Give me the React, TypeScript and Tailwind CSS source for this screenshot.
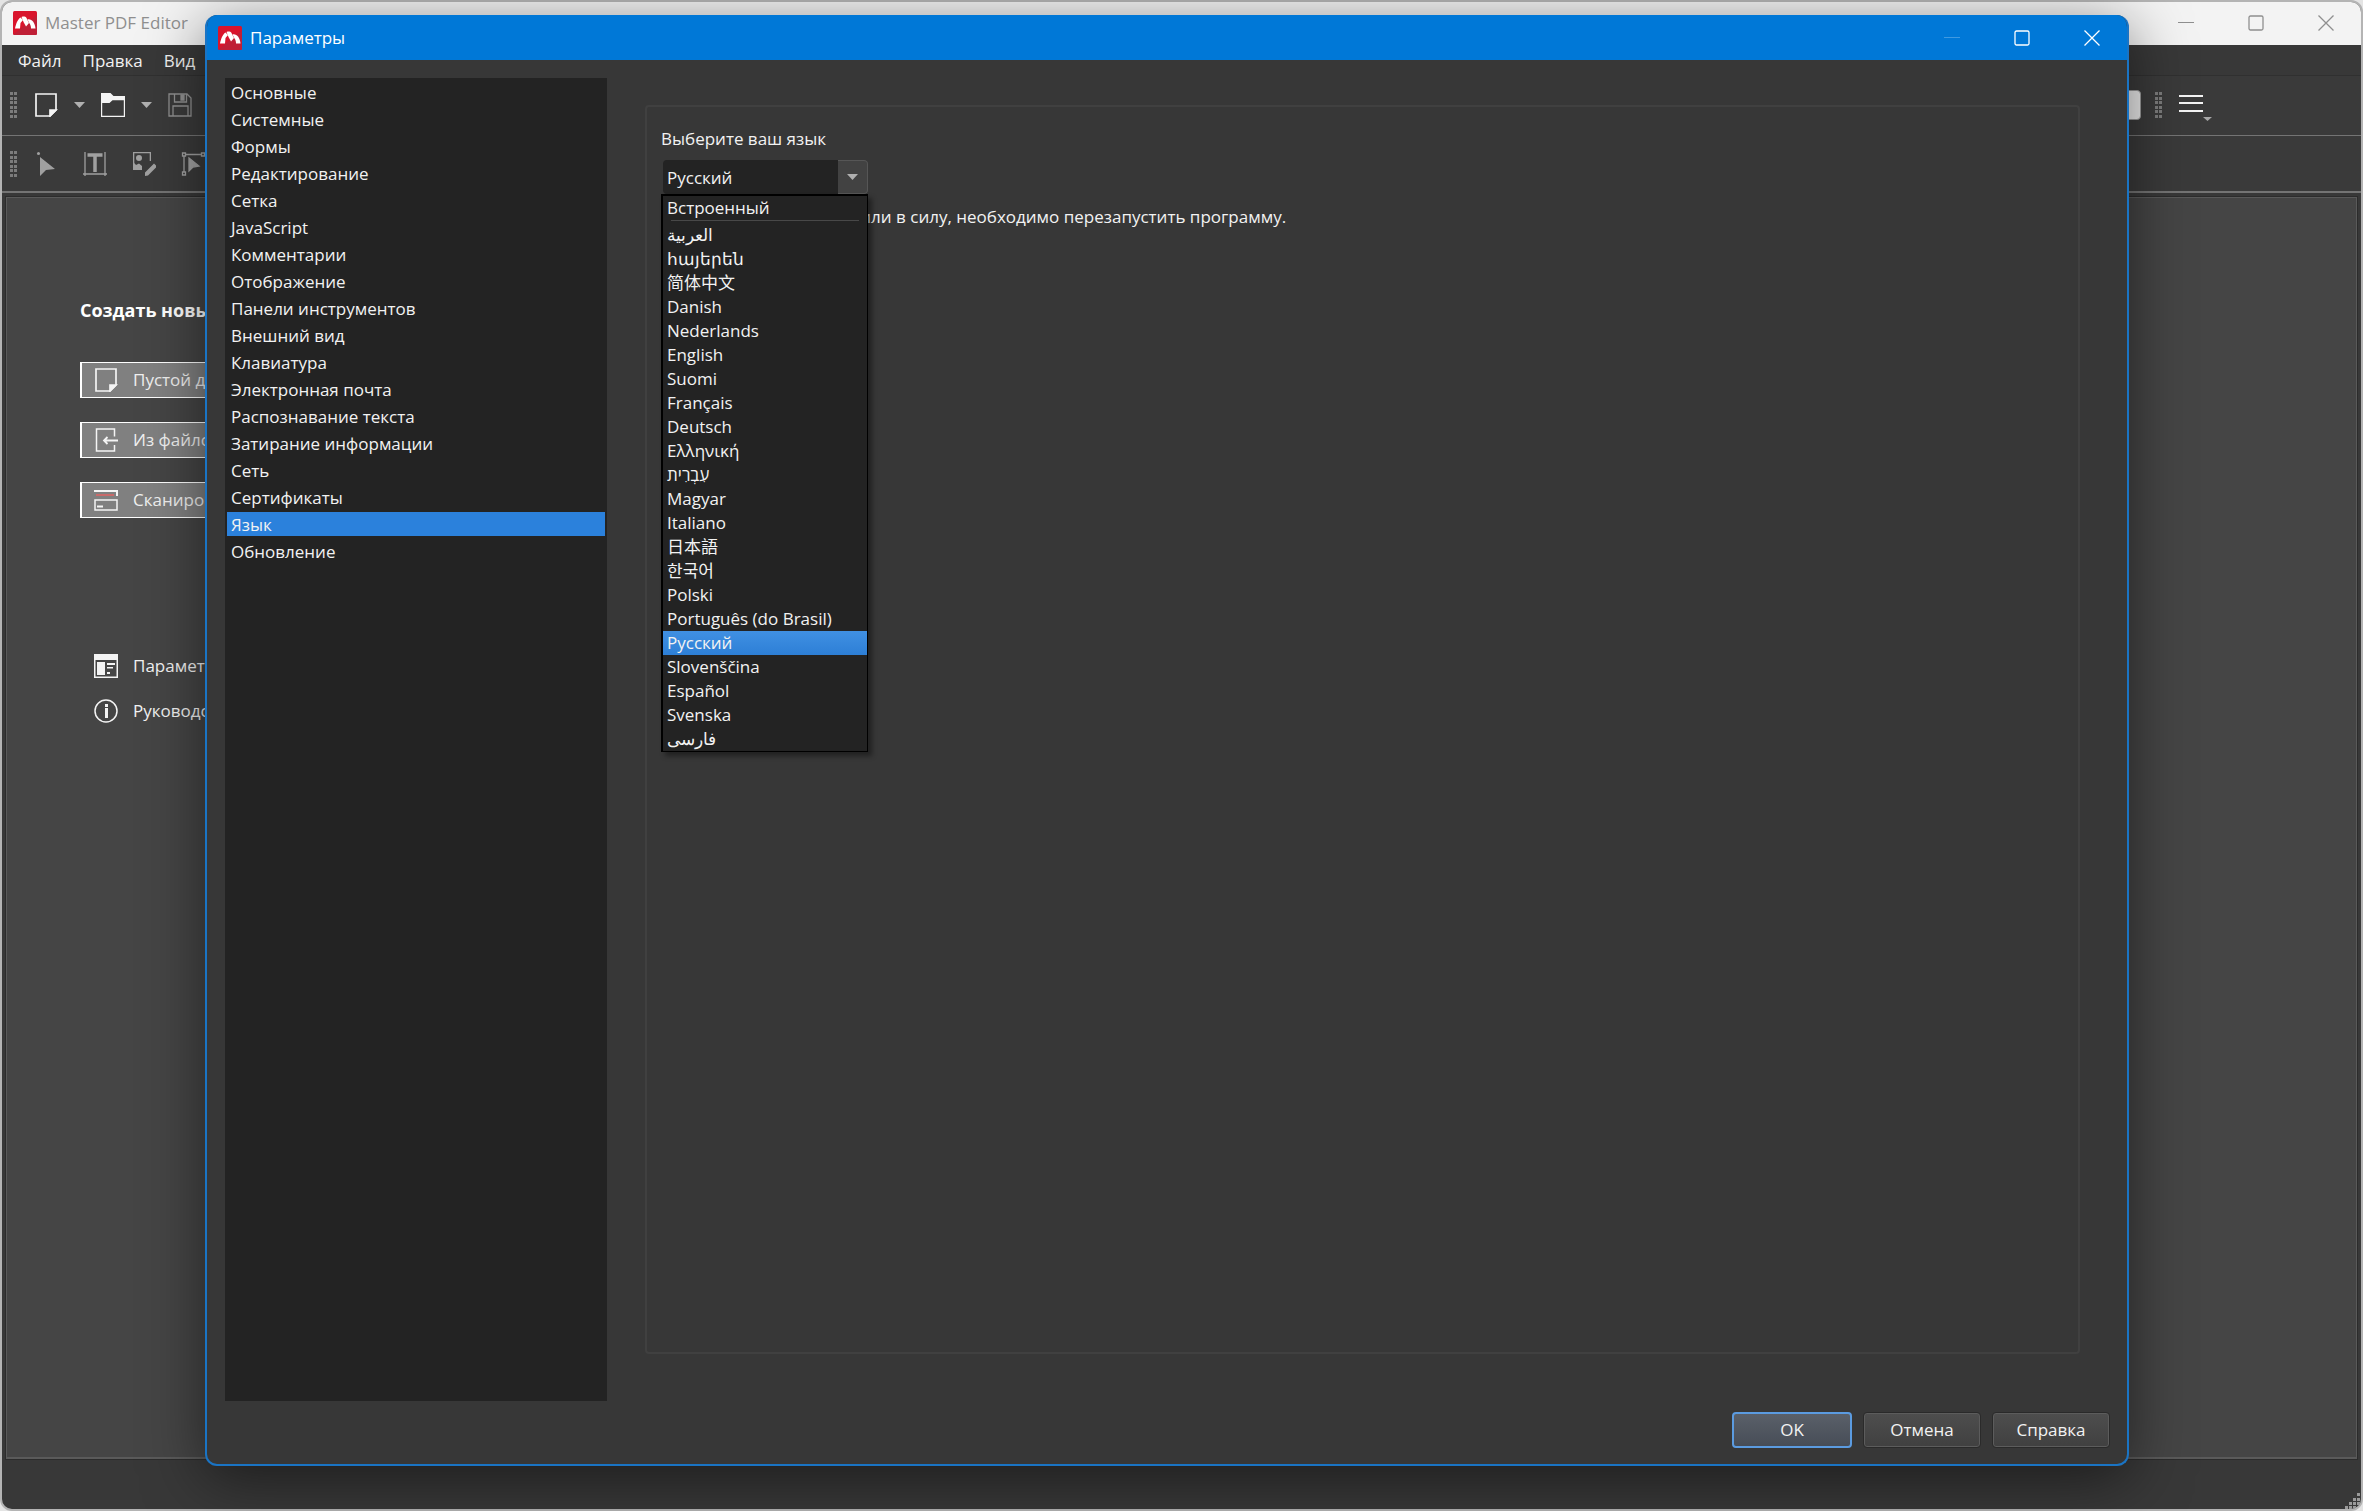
import { ReactNode, useState } from "react";

const sections = [
    "Основные",
    "Системные",
    "Формы",
    "Редактирование",
    "Сетка",
    "JavaScript",
    "Комментарии",
    "Отображение",
    "Панели инструментов",
    "Внешний вид",
    "Клавиатура",
    "Электронная почта",
    "Распознавание текста",
    "Затирание информации",
    "Сеть",
    "Сертификаты",
    "Язык",
    "Обновление",
];

const languages = [
    "العربية",
    "հայերեն",
    "简体中文",
    "Danish",
    "Nederlands",
    "English",
    "Suomi",
    "Français",
    "Deutsch",
    "Ελληνική",
    "עִבְרִית",
    "Magyar",
    "Italiano",
    "日本語",
    "한국어",
    "Polski",
    "Português (do Brasil)",
    "Русский",
    "Slovenščina",
    "Español",
    "Svenska",
    "فارسی",
];

function Logo() {
    return (
        <svg className="size-6 shrink-0" viewBox="0 0 24 24">
            <rect width="24" height="24" rx="1.5" fill="#d9142c" />
            <path d="M0 24 24 4v18.5a1.5 1.5 0 0 1-1.5 1.5z" fill="#b4233a" opacity=".7" />
            <path d="M2 17.5C3 13 4.500 8.500 7.500 6.500L10 9 7.500 12 7 17.500z" fill="#fff" />
            <path d="M8.500 6c2-.7 4-.5 5 1l2.500 5-3 3.500L10.500 11z" fill="#fff" />
            <path d="M14.500 8.500c4-1 7.500 3 8 9H18c0-2-.5-4-1.500-5z" fill="#fff" />
        </svg>
    );
}

function WindowButtons({ dimMinimize = false }: { dimMinimize?: boolean }) {
    return (
        <div className="flex h-full">
            <button type="button" aria-label="Свернуть" className="flex w-[70px] items-center justify-center">
                <svg className={dimMinimize ? "size-4 opacity-25" : "size-4"} viewBox="0 0 16 16" stroke="currentColor">
                    <path d="M0 7.500h16" />
                </svg>
            </button>
            <button type="button" aria-label="Развернуть" className="flex w-[70px] items-center justify-center">
                <svg className="size-4" viewBox="0 0 16 16" fill="none" stroke="currentColor" strokeWidth="1.300">
                    <rect x="1" y="1" width="14" height="14" rx="1.500" />
                </svg>
            </button>
            <button type="button" aria-label="Закрыть" className="flex w-[70px] items-center justify-center">
                <svg className="size-4" viewBox="0 0 16 16" fill="none" stroke="currentColor" strokeWidth="1.300">
                    <path d="m.5.5 15 15m0-15-15 15" />
                </svg>
            </button>
        </div>
    );
}

function Grip() {
    return (
        <svg className="h-[26px] w-2 shrink-0" viewBox="0 0 8 26" fill="#7c7c7c">
            {[0, 5, 9, 14, 18, 23].map((y) => (
                <path key={y} d={`M0 ${y}h3v3H0zM4 ${y}h3v3H4z`} />
            ))}
        </svg>
    );
}

function Caret() {
    return (
        <svg className="h-1.5 w-[11px] shrink-0" viewBox="0 0 11 6" fill="#b0b0b0">
            <path d="M0 0h11L5.500 6z" />
        </svg>
    );
}

function PageIcon() {
    return (
        <svg className="size-6 shrink-0" viewBox="0 0 24 24" fill="none" stroke="#f4f4f4" strokeWidth="1.700">
            <path d="M2 1h20v16l-6 6H2z" />
            <path d="M16 23v-6h6z" fill="#f4f4f4" />
        </svg>
    );
}

function FromFileIcon() {
    return (
        <svg className="size-6 shrink-0" viewBox="0 0 24 24" fill="none" stroke="#f4f4f4" strokeWidth="1.500">
            <path d="M20.500 8.500V1h-18v22h18v-6" />
            <path d="M24 12.500H10m3.500-3.500L10 12.500l3.500 3.500" strokeWidth="1.800" />
        </svg>
    );
}

function ScanIcon() {
    return (
        <svg className="size-6 shrink-0" viewBox="0 0 24 24" fill="none" stroke="#f4f4f4" strokeWidth="1.500">
            <path d="M0 3h23v5" strokeWidth="2" />
            <path d="M2 7h18" stroke="#c96a6a" strokeWidth="2" />
            <path d="M1 12h22v10H1z" />
            <path d="M3 18.500h6" strokeWidth="2" />
        </svg>
    );
}

function SettingsIcon() {
    return (
        <svg className="size-6 shrink-0" viewBox="0 0 24 24" fill="#f4f4f4">
            <path d="M0 0h24v24H0zm1.500 6v16.500h21V6z" fillRule="evenodd" />
            <path d="M3 8h8v13H3zM13 9h8v2h-8zM13 13h6v1.500h-6zM13 18h3v2h-3z" />
        </svg>
    );
}

function InfoIcon() {
    return (
        <svg className="size-6 shrink-0" viewBox="0 0 24 24" fill="none" stroke="#f4f4f4" strokeWidth="1.500">
            <circle cx="12" cy="12" r="11" />
            <path d="M12.500 9v10M12.500 5v3" strokeWidth="3" />
        </svg>
    );
}

function ToolButton({ label, children }: { label: string; children: ReactNode }) {
    return (
        <button type="button" aria-label={label} className="flex shrink-0 items-center">
            {children}
        </button>
    );
}

function StartButton({ icon, children }: { icon: ReactNode; children: ReactNode }) {
    return (
        <button
            type="button"
            className="flex h-9 items-center gap-[15px] border border-l-2 border-white bg-[#808080] pl-3 whitespace-nowrap text-[#f0f0f0]"
        >
            {icon}
            {children}
        </button>
    );
}

function MainWindow() {
    return (
        <div className="flex h-full flex-col overflow-hidden rounded-xl border-2 border-[#b4b4b4] bg-[#383838]">
            <header className="flex h-[43px] shrink-0 items-center bg-[#f3f3f3] pb-0.5 pl-[11px] text-[#8f8f8f]">
                <Logo />
                <h1 className="ml-2 grow">Master PDF Editor</h1>
                <WindowButtons />
            </header>
            <nav className="flex h-[31px] shrink-0 items-center gap-[21px] border-b border-[#303030] pt-0.5 pl-4">
                <button type="button">Файл</button>
                <button type="button">Правка</button>
                <button type="button">Вид</button>
            </nav>
            <div className="flex h-[60px] shrink-0 items-center border-b border-[#747474] bg-[#3a3a3a] pb-px pl-2">
                <Grip />
                <div className="ml-4 flex grow items-center gap-4">
                    <ToolButton label="Создать">
                        <PageIcon />
                    </ToolButton>
                    <Caret />
                    <ToolButton label="Открыть">
                        <svg className="size-6" viewBox="0 0 24 24" fill="#f4f4f4">
                            <path d="M0 0h9.500l3 3H24v21H0zm1.200 10v12.800h21.600V7.200H11.500L8.500 10z" fillRule="evenodd" />
                        </svg>
                    </ToolButton>
                    <Caret />
                    <ToolButton label="Сохранить">
                        <svg className="size-6" viewBox="0 0 24 24" fill="none" stroke="#909090" strokeWidth="1.300">
                            <path d="M1 1h18l4 4v18H1zM6.500 1v8h12V1M5 23V13h15v10" />
                            <path d="M13 2h3v5h-3z" fill="#909090" />
                        </svg>
                    </ToolButton>
                </div>
                <input aria-label="Поиск" className="h-[30px] w-40 rounded border border-[#9a9a9a] bg-[#ececec]" />
                <div className="mr-[148px] ml-3.5 flex items-center gap-4">
                    <Grip />
                    <ToolButton label="Меню">
                        <svg className="h-8 w-[34px]" viewBox="0 0 34 32" fill="#f4f4f4">
                            <path d="M0 6h24v2H0zM0 13h24v2H0zM0 21h24v2H0z" />
                            <path d="M24 28h9l-4.500 4z" fill="#a8a8a8" />
                        </svg>
                    </ToolButton>
                </div>
            </div>
            <div className="flex h-[57px] shrink-0 items-center border-b-2 border-[#747474] bg-[#3a3a3a] pl-2">
                <Grip />
                <div className="ml-4 flex items-center gap-[25px]">
                    <ToolButton label="Выделение">
                        <svg className="size-6" viewBox="0 0 24 24" fill="#a0a0a0">
                            <path d="M6 5 21 17l-9 1-6 6z" />
                            <circle cx="4.500" cy="1.500" r="1.500" />
                        </svg>
                    </ToolButton>
                    <ToolButton label="Текст">
                        <svg className="size-6" viewBox="0 0 24 24" fill="none" stroke="#a0a0a0" strokeWidth="1.300">
                            <path d="M2 0v24M22 0v24M0 22h24" />
                            <path d="M4.500 3h15M12 3v17" strokeWidth="3.500" />
                        </svg>
                    </ToolButton>
                    <ToolButton label="Изображение">
                        <svg className="size-6" viewBox="0 0 24 24" fill="#a0a0a0">
                            <path d="M1 0h18v9h-1.300V1.300H2.300V11H1z" />
                            <circle cx="7" cy="6" r="3" />
                            <path d="M1 9.500 4 13l3-1.500 3 2.500v4H1zM13 20.500l9-9 3 3-9 9-3 .5z" />
                        </svg>
                    </ToolButton>
                    <ToolButton label="Объект">
                        <svg className="size-6" viewBox="0 0 24 24" fill="none" stroke="#a0a0a0" strokeWidth="1.300">
                            <path d="M1.500 1h3v3h-3zM20.500 1h3v3h-3zM1.500 20h3v3h-3zM4.500 2.500h16M3 4v16" />
                            <path d="m8 6 10 8-6 1-4 4z" fill="#a0a0a0" />
                        </svg>
                    </ToolButton>
                </div>
            </div>
            <main className="mx-[3px] mt-[3px] flex grow border border-[#2c2c2c] bg-[#454545]">
                <div className="flex grow flex-col border border-b-2 border-[#5a5a5a] pt-[99px] pl-[73px]">
                    <h2 className="text-[18px] font-bold whitespace-nowrap text-white">Создать новый документ</h2>
                    <div className="mt-[38px] flex w-[400px] flex-col gap-6">
                        <StartButton icon={<PageIcon />}>Пустой документ</StartButton>
                        <StartButton icon={<FromFileIcon />}>Из файлов</StartButton>
                        <StartButton icon={<ScanIcon />}>Сканировать</StartButton>
                    </div>
                    <div className="mt-[136px] flex flex-col items-start gap-[21px] pl-3.5">
                        <button type="button" className="flex h-6 items-center gap-[15px]">
                            <SettingsIcon />
                            Параметры
                        </button>
                        <button type="button" className="flex h-6 items-center gap-[15px]">
                            <InfoIcon />
                            Руководство
                        </button>
                    </div>
                </div>
            </main>
            <footer className="flex h-[49px] shrink-0 items-end justify-end">
                <svg className="size-4" viewBox="0 0 16 16" fill="#9a9a9a">
                    <path d="M12 0h3v3h-3zM8 5h3v3H8zM12 5h3v3h-3zM4 9h3v3H4zM8 9h3v3H8zM12 9h3v3h-3zM0 13h3v3H0zM4 13h3v3H4zM8 13h3v3H8zM12 13h3v3h-3z" />
                </svg>
            </footer>
        </div>
    );
}

function LanguageSelect() {
    const [language, setLanguage] = useState("Русский");

    return (
        <div className="relative mt-[9px] w-[207px]">
            <button
                type="button"
                id="language"
                aria-haspopup="listbox"
                aria-expanded="true"
                className="ml-0.5 flex h-[34px] w-[205px] items-stretch rounded bg-[#232323] text-left"
            >
                <span className="flex grow items-center pt-px pl-1">{language}</span>
                <span className="flex w-[30px] items-center justify-center rounded-r border border-l-0 border-[#565656] bg-[#424242]">
                    <Caret />
                </span>
            </button>
            <ul
                role="listbox"
                aria-labelledby="language-label"
                className="absolute top-[34px] left-0 w-full border-2 border-r border-b border-black bg-[#232323] shadow-[4px_4px_5px_rgba(0,0,0,0.4)]"
            >
                <li role="option" aria-selected="false" className="h-[22px] pl-1 leading-[24px]">
                    Встроенный
                </li>
                <li role="separator" className="mx-2 my-0.5 h-px bg-[#484848]" />
                {languages.map((name) => (
                    <li
                        key={name}
                        role="option"
                        aria-selected={name === language}
                        onClick={() => setLanguage(name)}
                        className={
                            name === language
                                ? "h-6 bg-linear-to-b from-[#4090e2] to-[#2d7fd6] pl-1 leading-[24px]"
                                : "h-6 pl-1 leading-[24px]"
                        }
                    >
                        {name}
                    </li>
                ))}
            </ul>
        </div>
    );
}

function SettingsDialog() {
    const [section, setSection] = useState("Язык");

    return (
        <div
            role="dialog"
            aria-label="Параметры"
            className="absolute top-[15px] right-[234px] bottom-[45px] left-[205px] flex flex-col overflow-hidden rounded-xl border-2 border-t-0 border-[#1a74c4] bg-[#373737] shadow-[0_12px_60px_rgba(0,0,0,0.5)]"
        >
            <header className="flex h-[45px] shrink-0 items-center bg-[#0078d7] pl-[11px] text-white">
                <Logo />
                <h2 className="ml-2 grow">Параметры</h2>
                <WindowButtons dimMinimize />
            </header>
            <div className="flex grow pl-[18px]">
                <ul className="mt-[18px] mb-[11px] flex w-[382px] shrink-0 flex-col gap-[3px] bg-[#232323] p-0.5">
                    {sections.map((name) => (
                        <li key={name}>
                            <button
                                type="button"
                                onClick={() => setSection(name)}
                                className={
                                    name === section
                                        ? "block h-6 w-full bg-[#2b81dc] pt-0.5 pl-1 text-left leading-[22px]"
                                        : "block h-6 w-full pt-0.5 pl-1 text-left leading-[22px]"
                                }
                            >
                                {name}
                            </button>
                        </li>
                    ))}
                </ul>
                <section className="mt-[45px] mr-[47px] mb-[58px] ml-[38px] grow rounded border-2 border-[#404040] pt-5 pl-[14px]">
                    <label id="language-label" htmlFor="language" className="block leading-[24px]">
                        Выберите ваш язык
                    </label>
                    <LanguageSelect />
                    <p className="mt-[11px] leading-[24px]">
                        Чтобы изменения вступили в силу, необходимо перезапустить программу.
                    </p>
                </section>
            </div>
            <footer className="flex justify-end gap-[11px] pr-[17px] pb-4">
                <button
                    type="button"
                    className="h-9 w-[120px] rounded border-2 border-[#5b9be0] bg-linear-to-b from-[#5a6069] to-[#474d57]"
                >
                    OK
                </button>
                <button
                    type="button"
                    className="h-9 w-[118px] rounded border border-[#2a2a2a] bg-linear-to-b from-[#4e4e4e] to-[#404040] shadow-[inset_0_0_0_1px_#5c5c5c]"
                >
                    Отмена
                </button>
                <button
                    type="button"
                    className="h-9 w-[118px] rounded border border-[#2a2a2a] bg-linear-to-b from-[#4e4e4e] to-[#404040] shadow-[inset_0_0_0_1px_#5c5c5c]"
                >
                    Справка
                </button>
            </footer>
        </div>
    );
}

export default function App() {
    return (
        <div className="relative h-screen w-full overflow-hidden bg-[#e4e4e4] font-['Open_Sans','Noto_Sans','Noto_Sans_CJK_SC',sans-serif] text-[17px] text-[#f2f2f2]">
            <MainWindow />
            <SettingsDialog />
        </div>
    );
}
